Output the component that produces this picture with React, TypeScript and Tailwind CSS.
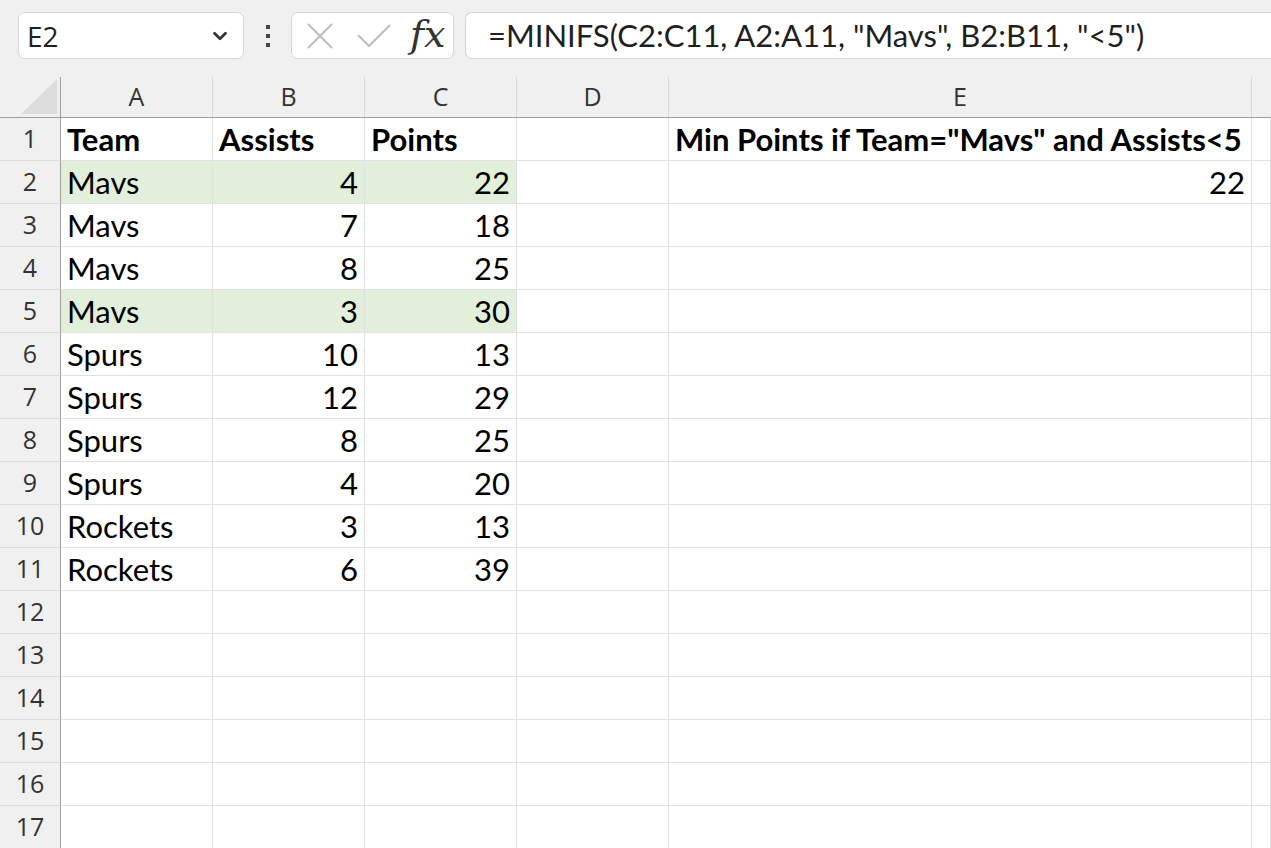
import { ChevronDown } from 'lucide-react'

const cols = ['A', 'B', 'C', 'D', 'E']

type Row = { a: string; b: string; c: string; e: string; hl?: boolean; bold?: boolean }

const rows: Row[] = [
  { a: 'Team', b: 'Assists', c: 'Points', e: 'Min Points if Team="Mavs" and Assists<5', bold: true },
  { a: 'Mavs', b: '4', c: '22', e: '22', hl: true },
  { a: 'Mavs', b: '7', c: '18', e: '' },
  { a: 'Mavs', b: '8', c: '25', e: '' },
  { a: 'Mavs', b: '3', c: '30', e: '', hl: true },
  { a: 'Spurs', b: '10', c: '13', e: '' },
  { a: 'Spurs', b: '12', c: '29', e: '' },
  { a: 'Spurs', b: '8', c: '25', e: '' },
  { a: 'Spurs', b: '4', c: '20', e: '' },
  { a: 'Rockets', b: '3', c: '13', e: '' },
  { a: 'Rockets', b: '6', c: '39', e: '' },
  { a: '', b: '', c: '', e: '' },
  { a: '', b: '', c: '', e: '' },
  { a: '', b: '', c: '', e: '' },
  { a: '', b: '', c: '', e: '' },
  { a: '', b: '', c: '', e: '' },
  { a: '', b: '', c: '', e: '' },
]

const grid = 'grid grid-cols-[61px_152px_152px_152px_152px_583px_1fr]'
const cellFont = { fontFamily: 'Lato, "Liberation Sans", sans-serif' }
const uiFont = { fontFamily: '"Open Sans", "Noto Sans", sans-serif' }

function Cell({ children, right, hl, bold }: { children?: string; right?: boolean; hl?: boolean; bold?: boolean }) {
  return (
    <div
      className={`h-[43px] border-r border-b border-[#e1e1e1] flex items-center px-[6px] text-[31px] leading-none text-black whitespace-nowrap ${
        right ? 'justify-end' : ''
      } ${hl ? 'bg-[#e2efda]' : 'bg-white'} ${bold ? 'font-bold' : ''}`}
      style={cellFont}
    >
      {children}
    </div>
  )
}

export default function App() {
  return (
    <div className="w-[1271px] h-[848px] overflow-hidden bg-[#f0f0f0]">
      {/* formula bar */}
      <div className="h-[77px] flex items-start pt-[12px] pl-[18px]">
        <div
          className="w-[226px] h-[47px] bg-white border border-[#d6d6d6] rounded-[7px] flex items-center justify-between pl-[8px] pr-[12px]"
          style={uiFont}
        >
          <span className="text-[28px] leading-none text-[#1f1f1f]">E2</span>
          <ChevronDown size={22} strokeWidth={3} className="text-[#333]" />
        </div>
        <div className="w-[47px] h-[47px] flex flex-col items-center justify-center gap-[5px]">
          <span className="w-[4px] h-[4px] bg-[#444]" />
          <span className="w-[4px] h-[4px] bg-[#444]" />
          <span className="w-[4px] h-[4px] bg-[#444]" />
        </div>
        <div className="w-[163px] h-[47px] bg-white border border-[#d6d6d6] rounded-[7px] flex items-center pl-[13px]">
          <svg width="30" height="30" viewBox="0 0 30 30" className="mr-[21px]">
            <path d="M3 3 L27 27 M27 3 L3 27" stroke="#bdbdbd" strokeWidth="2" fill="none" />
          </svg>
          <svg width="36" height="26" viewBox="0 0 36 26" className="mr-[18px]">
            <path d="M2 12 L13 23 L34 2" stroke="#bdbdbd" strokeWidth="2" fill="none" />
          </svg>
          <span
            className="text-[38px] italic text-[#333] leading-none -mt-[4px]"
            style={{ fontFamily: '"DejaVu Serif", "Liberation Serif", serif' }}
          >
            fx
          </span>
        </div>
        <div
          className="ml-[11px] flex-1 h-[47px] bg-white border border-[#d6d6d6] border-r-0 rounded-l-[7px] flex items-center pl-[22px]"
          style={cellFont}
        >
          <span className="text-[31px] leading-none text-[#1f1f1f] whitespace-nowrap">
            =MINIFS(C2:C11, A2:A11, "Mavs", B2:B11, "&lt;5")
          </span>
        </div>
      </div>

      {/* column headers */}
      <div className={`${grid} h-[41px] border-b border-[#9f9f9f]`} style={uiFont}>
        <div className="border-r border-[#9f9f9f] flex items-end justify-end pr-[3px] pb-[3px]">
          <svg width="36" height="35" viewBox="0 0 36 35">
            <path d="M36 0 L36 35 L0 35 Z" fill="#dcdcdc" />
          </svg>
        </div>
        {cols.map((c) => (
          <div key={c} className="border-r border-[#d9d9d9] flex items-center justify-center text-[25px] text-[#333]">
            {c}
          </div>
        ))}
        <div />
      </div>

      {/* rows */}
      {rows.map((r, i) => (
        <div key={i} className={grid}>
          <div
            className="h-[43px] border-r border-[#9f9f9f] border-b border-b-[#dcdcdc] flex items-center justify-center text-[25px] text-[#333] bg-[#f0f0f0]"
            style={uiFont}
          >
            {i + 1}
          </div>
          <Cell hl={r.hl} bold={r.bold}>{r.a}</Cell>
          <Cell hl={r.hl} bold={r.bold} right={!r.bold}>{r.b}</Cell>
          <Cell hl={r.hl} bold={r.bold} right={!r.bold}>{r.c}</Cell>
          <Cell />
          <Cell bold={r.bold} right={!r.bold}>{r.e}</Cell>
          <Cell />
        </div>
      ))}
    </div>
  )
}
